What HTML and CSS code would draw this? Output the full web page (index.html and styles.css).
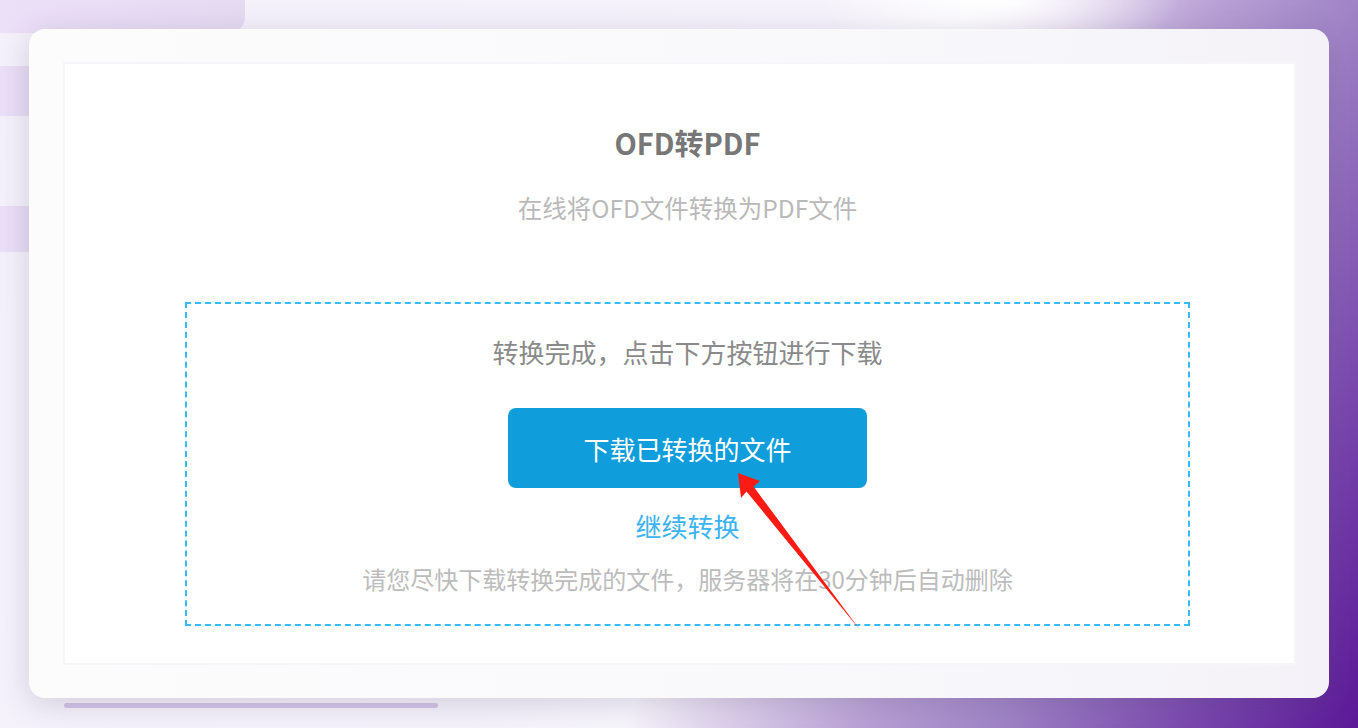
FILE: index.html
```html
<!DOCTYPE html>
<html lang="zh-CN">
<head>
<meta charset="utf-8">
<title>OFD转PDF</title>
<link rel="stylesheet" href="styles.css">
</head>
<body>
<div class="deco deco-top"></div>
<div class="deco deco-s1"></div>
<div class="deco deco-s2"></div>
<main class="card">
  <section class="panel">
    <h1 class="title">OFD转PDF</h1>
    <p class="subtitle">在线将OFD文件转换为PDF文件</p>
    <div class="dropzone">
      <p class="status">转换完成，点击下方按钮进行下载</p>
      <button class="download">下载已转换的文件</button>
      <a class="again" href="#">继续转换</a>
      <p class="note">请您尽快下载转换完成的文件，服务器将在30分钟后自动删除</p>
    </div>
  </section>
</main>
<div class="underbar"></div>
<svg class="arrow" width="1358" height="728" viewBox="0 0 1358 728">
  <polygon points="738,473 760,481 753.5,486.5 860,630 746.5,491.5 741,498" fill="#fb1b12"/>
</svg>
</body>
</html>
```

FILE: styles.css
```css
html, body {
  margin: 0;
  padding: 0;
}
body {
  width: 1358px;
  height: 728px;
  overflow: hidden;
  position: relative;
  font-family: "Noto Sans CJK SC", "Microsoft YaHei", sans-serif;
  background:
    radial-gradient(ellipse 180px 70px at 1000px 0px, rgba(255,255,255,0.95), rgba(255,255,255,0) 100%),
    linear-gradient(116deg, #f4f1fb 0%, #f5f2fb 48%, #f8f6fc 57%, #ddd0ea 63%, #b9a1d5 71%, #a084c6 79%, #7a49ae 90%, #5b1897 100%);
}
.deco {
  position: absolute;
  left: 0;
  background: linear-gradient(to right, #ecdff8, #e6daf2);
}
.deco-top {
  top: 0;
  width: 245px;
  height: 33px;
  border-bottom-right-radius: 16px;
}
.deco-s1 {
  top: 66px;
  width: 40px;
  height: 50px;
}
.deco-s2 {
  top: 206px;
  width: 40px;
  height: 46px;
}
.card {
  position: relative;
  margin: 29px 0 0 29px;
  width: 1300px;
  height: 669px;
  box-sizing: border-box;
  padding: 33px 33px 33px 34px;
  border-radius: 16px;
  background: linear-gradient(to right, #fcfcfd 0%, #f9f9fb 60%, #f4f2f8 100%);
  box-shadow: 0 6px 30px rgba(70, 60, 100, 0.2);
}
.panel {
  height: 603px;
  box-sizing: border-box;
  background: #ffffff;
  border: 2px solid #f6f5f9;
  padding: 0 104px 0 120px;
  display: flex;
  flex-direction: column;
  align-items: center;
  text-align: center;
}
.title {
  margin: 58px 0 0;
  font-size: 29px;
  line-height: 40px;
  font-weight: 700;
  color: #777777;
}
.subtitle {
  margin: 28px 0 0;
  font-size: 24.5px;
  line-height: 36px;
  color: #b9b9b9;
}
.dropzone {
  margin-top: 76px;
  align-self: stretch;
  height: 324px;
  box-sizing: border-box;
  border: 2px dashed #38baf6;
  padding-top: 30px;
  display: flex;
  flex-direction: column;
  align-items: center;
}
.status {
  margin: 0;
  font-size: 26px;
  line-height: 36px;
  color: #8a8a8a;
}
.download {
  margin-top: 38px;
  width: 359px;
  height: 80px;
  border: none;
  border-radius: 8px;
  background: #0f9ddb;
  color: #ffffff;
  font-family: inherit;
  font-size: 26px;
  padding: 0;
}
.again {
  margin-top: 20px;
  font-size: 26px;
  line-height: 36px;
  color: #3ab3f0;
  text-decoration: none;
}
.note {
  margin: 18px 0 0;
  font-size: 24px;
  line-height: 34px;
  color: #bcbcbc;
}
.underbar {
  margin: 5px 0 0 64px;
  width: 374px;
  height: 5px;
  border-radius: 3px;
  background: #d4c5e6;
}
.arrow {
  position: absolute;
  left: 0;
  top: 0;
  pointer-events: none;
}
```
